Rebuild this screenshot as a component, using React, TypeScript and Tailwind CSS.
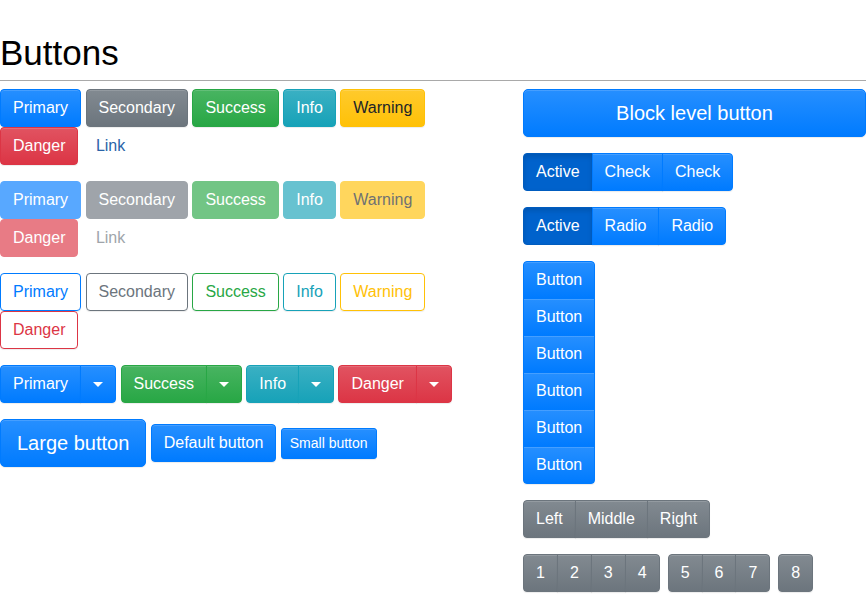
type Variant = "primary" | "secondary" | "success" | "info" | "warning" | "danger";

const solid: Record<Variant, string> = {
  primary: "text-white border-[#007bff] bg-[#007bff] bg-[linear-gradient(180deg,#268fff,#007bff)]",
  secondary: "text-white border-[#6c757d] bg-[#6c757d] bg-[linear-gradient(180deg,#828a91,#6c757d)]",
  success: "text-white border-[#28a745] bg-[#28a745] bg-[linear-gradient(180deg,#48b461,#28a745)]",
  info: "text-white border-[#17a2b8] bg-[#17a2b8] bg-[linear-gradient(180deg,#3ab0c3,#17a2b8)]",
  warning: "text-[#212529] border-[#ffc107] bg-[#ffc107] bg-[linear-gradient(180deg,#ffca2c,#ffc107)]",
  danger: "text-white border-[#dc3545] bg-[#dc3545] bg-[linear-gradient(180deg,#e15361,#dc3545)]",
};

const flat: Record<Variant, string> = {
  primary: "text-white border-[#007bff] bg-[#007bff]",
  secondary: "text-white border-[#6c757d] bg-[#6c757d]",
  success: "text-white border-[#28a745] bg-[#28a745]",
  info: "text-white border-[#17a2b8] bg-[#17a2b8]",
  warning: "text-[#212529] border-[#ffc107] bg-[#ffc107]",
  danger: "text-white border-[#dc3545] bg-[#dc3545]",
};

const outline: Record<Variant, string> = {
  primary: "text-[#007bff] border-[#007bff]",
  secondary: "text-[#6c757d] border-[#6c757d]",
  success: "text-[#28a745] border-[#28a745]",
  info: "text-[#17a2b8] border-[#17a2b8]",
  warning: "text-[#ffc107] border-[#ffc107]",
  danger: "text-[#dc3545] border-[#dc3545]",
};

const base =
  "border px-3 py-1.5 text-base leading-6 whitespace-nowrap shadow-[inset_0_1px_0_rgba(255,255,255,0.15),0_1px_1px_rgba(0,0,0,0.075)]";

const active =
  "text-white border-[#005cbf] bg-[#0062cc] shadow-[inset_0_3px_5px_rgba(0,0,0,0.125)]";

const names: [Variant, string][] = [
  ["primary", "Primary"],
  ["secondary", "Secondary"],
  ["success", "Success"],
  ["info", "Info"],
  ["warning", "Warning"],
  ["danger", "Danger"],
];

function Caret() {
  return <span className="inline-block h-0 w-0 border-x-[5px] border-t-[5px] border-x-transparent border-t-white align-middle" />;
}

function Split({ v, label }: { v: Variant; label: string }) {
  return (
    <div className="flex">
      <button className={`${base} ${solid[v]} rounded-l`}>{label}</button>
      <button className={`${solid[v]} -ml-px flex h-[38px] w-[36px] items-center justify-center rounded-r border shadow-[inset_0_1px_0_rgba(255,255,255,0.15),0_1px_1px_rgba(0,0,0,0.075)]`}>
        <Caret />
      </button>
    </div>
  );
}

function Group({ items, v = "primary", activeFirst = false }: { items: string[]; v?: Variant; activeFirst?: boolean }) {
  return (
    <div className="flex">
      {items.map((t, i) => (
        <button
          key={i}
          className={`${base} ${activeFirst && i === 0 ? active : solid[v]} ${i > 0 ? "-ml-px" : ""} ${i === 0 ? "rounded-l" : ""} ${i === items.length - 1 ? "rounded-r" : ""}`}
        >
          {t}
        </button>
      ))}
    </div>
  );
}

export default function App() {
  return (
    <div className="min-h-screen bg-white pt-[32px] font-['Liberation_Sans',Arial,sans-serif] text-[#212529]">
      <h1 className="text-[35px] leading-[42px] text-black">Buttons</h1>
      <hr className="mt-[6px] border-t border-[#a9a9a9]" />

      <div className="mt-2 flex">
        <div className="w-[523px] shrink-0">
          <div className="flex max-w-[480px] flex-col gap-4">
            <div className="flex flex-wrap gap-x-[4.4px]">
              {names.map(([v, t]) => (
                <button key={v} className={`${base} ${solid[v]} rounded`}>{t}</button>
              ))}
              <button className="px-3 py-1.5 text-base leading-6 border border-transparent text-[#2a64a8]">Link</button>
            </div>

            <div className="flex flex-wrap gap-x-[4.4px]">
              {names.map(([v, t]) => (
                <button key={v} className={`border px-3 py-1.5 text-base leading-6 opacity-[0.65] ${flat[v]} rounded`}>{t}</button>
              ))}
              <button className="px-3 py-1.5 text-base leading-6 border border-transparent text-[#6c757d] opacity-[0.65]">Link</button>
            </div>

            <div className="flex flex-wrap gap-x-[4.4px]">
              {names.map(([v, t]) => (
                <button key={v} className={`${base} ${outline[v]} rounded bg-transparent`}>{t}</button>
              ))}
            </div>

            <div className="flex gap-x-[4.4px]">
              <Split v="primary" label="Primary" />
              <Split v="success" label="Success" />
              <Split v="info" label="Info" />
              <Split v="danger" label="Danger" />
            </div>

            <div className="flex items-center gap-x-[4.4px]">
              <button className={`${solid.primary} rounded-[5px] border px-4 py-2 text-xl leading-[30px] shadow-[inset_0_1px_0_rgba(255,255,255,0.15),0_1px_1px_rgba(0,0,0,0.075)]`}>Large button</button>
              <button className={`${base} ${solid.primary} rounded`}>Default button</button>
              <button className={`${solid.primary} rounded-[3px] border px-2 py-1 text-sm leading-[21px] shadow-[inset_0_1px_0_rgba(255,255,255,0.15),0_1px_1px_rgba(0,0,0,0.075)]`}>Small button</button>
            </div>
          </div>
        </div>

        <div className="flex flex-1 flex-col items-start gap-4">
          <button className={`${solid.primary} w-full rounded-[5px] border px-4 py-2 text-xl leading-[30px] shadow-[inset_0_1px_0_rgba(255,255,255,0.15),0_1px_1px_rgba(0,0,0,0.075)]`}>Block level button</button>

          <Group items={["Active", "Check", "Check"]} activeFirst />
          <Group items={["Active", "Radio", "Radio"]} activeFirst />

          <div className="flex flex-col">
            {[0, 1, 2, 3, 4, 5].map((i) => (
              <button
                key={i}
                className={`${base} ${solid.primary} ${i > 0 ? "-mt-px" : ""} ${i === 0 ? "rounded-t" : ""} ${i === 5 ? "rounded-b" : ""}`}
              >
                Button
              </button>
            ))}
          </div>

          <Group items={["Left", "Middle", "Right"]} v="secondary" />

          <div className="flex gap-2">
            <Group items={["1", "2", "3", "4"]} v="secondary" />
            <Group items={["5", "6", "7"]} v="secondary" />
            <Group items={["8"]} v="secondary" />
          </div>
        </div>
      </div>
    </div>
  );
}
